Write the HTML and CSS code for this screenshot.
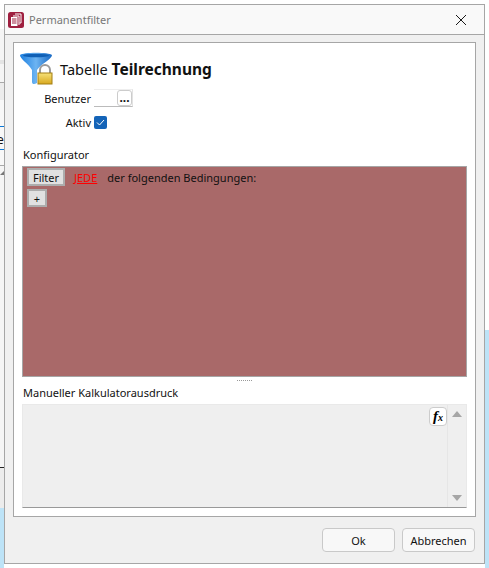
FILE: index.html
```html
<!DOCTYPE html>
<html lang="de">
<head>
  <meta charset="UTF-8">
  <title>Permanentfilter</title>
  <link rel="stylesheet" href="styles.css">
</head>
<body>
  <span class="behind-text">e</span>
  <span class="behind-arrow"></span>

  <div class="dialog">
    <div class="titlebar">
      <svg class="app-icon" width="16" height="16" viewBox="0 0 16 16">
        <rect x="0" y="0" width="16" height="16" rx="2.500" fill="#9e1f3f"/>
        <path d="M7 2h6v9h-1.500M5 4h6v9" fill="none" stroke="#fff" stroke-width="1"/>
        <path d="M3 5h6.500v9H3z" fill="#fff"/>
        <path d="M4 7h4.500M4 9h4.500M4 11h4.500" stroke="#9e1f3f" stroke-width="1"/>
      </svg>
      <span class="title">Permanentfilter</span>
      <svg class="close" width="10" height="10" viewBox="0 0 10 10">
        <path d="M0 0L10 10M10 0L0 10" stroke="#1a1a1a" stroke-width="1"/>
      </svg>
    </div>

    <div class="content">
      <div class="panel">
        <div class="head">
          <svg class="funnel" width="33" height="33" viewBox="0 0 33 33">
            <defs>
              <linearGradient id="blue" x1="0" y1="0" x2="1" y2="0">
                <stop offset="0" stop-color="#1c7fe0"/>
                <stop offset="0.5" stop-color="#6db4f2"/>
                <stop offset="1" stop-color="#1668c4"/>
              </linearGradient>
              <linearGradient id="gold" x1="0" y1="0" x2="0" y2="1">
                <stop offset="0" stop-color="#f7e27a"/>
                <stop offset="1" stop-color="#d8a81e"/>
              </linearGradient>
            </defs>
            <path d="M0 3C3 0 29 0 32 3C32 7 22 11 17 18V31C14 33 12 32 12 30V18C8 11 0 7 0 3Z" fill="url(#blue)"/>
            <ellipse cx="16" cy="3.500" rx="13" ry="1.800" fill="#0f5fb5"/>
            <path d="M20 22v-4a5 5 0 0 1 10 0v4" fill="none" stroke="#9a9a9a" stroke-width="2"/>
            <rect x="18" y="21" width="14" height="11" fill="url(#gold)" stroke="#a37f12"/>
          </svg>
          <span class="head-text">Tabelle <b>Teilrechnung</b></span>
        </div>

        <div class="form">
          <label class="form-label">Benutzer</label>
          <div class="picker"><span class="picker-btn">...</span></div>
          <label class="form-label">Aktiv</label>
          <span class="check">
            <svg width="9" height="7" viewBox="0 0 9 7"><path d="M1 3.500L3.500 6L8 1" fill="none" stroke="#fff" stroke-width="1"/></svg>
          </span>
        </div>

        <div class="section-label">Konfigurator</div>
        <div class="config">
          <div class="config-row">
            <button class="btn-flat btn-filter">Filter</button>
            <a class="jede">JEDE</a>
            <span>der folgenden Bedingungen:</span>
          </div>
          <button class="btn-flat btn-add">+</button>
        </div>

        <div class="splitter"></div>

        <div class="section-label section-label-calc">Manueller Kalkulatorausdruck</div>
        <div class="calc">
          <div class="calc-main">
            <span class="fx"><i>f</i><i class="fx-x">x</i></span>
          </div>
          <div class="scroll">
            <span class="arrow-up"></span>
            <span class="arrow-down"></span>
          </div>
        </div>
      </div>

      <div class="footer">
        <button class="btn">Ok</button>
        <button class="btn">Abbrechen</button>
      </div>
    </div>
  </div>
</body>
</html>
```

FILE: styles.css
```css
html, body {
  margin: 0;
  height: 568px;
  overflow: hidden;
}
body {
  box-sizing: border-box;
  padding: 4px;
  position: relative;
  font-family: "Noto Sans", sans-serif;
  font-size: 11px;
  color: #111;
  background:
    linear-gradient(#bde3f7, #bde3f7) left 0 top 508px / 4px 60px no-repeat,
    linear-gradient(#ececec, #ececec) left 0 top 468px / 4px 40px no-repeat,
    linear-gradient(#222, #222) left 0 top 467px / 4px 1px no-repeat,
    linear-gradient(#f5f5f5, #f5f5f5) left 0 top 166px / 4px 301px no-repeat,
    linear-gradient(#a8a8a8, #a8a8a8) left 0 top 165px / 4px 1px no-repeat,
    linear-gradient(#0a78d7, #0a78d7) left 0 top 149px / 4px 1px no-repeat,
    linear-gradient(#0a78d7, #0a78d7) left 0 top 126px / 4px 1px no-repeat,
    linear-gradient(#f8f8f8, #f8f8f8) left 0 top 100px / 4px 65px no-repeat,
    linear-gradient(#ececec, #ececec) left 0 top 83px / 4px 17px no-repeat,
    linear-gradient(#a8a8a8, #a8a8a8) left 0 top 82px / 4px 1px no-repeat,
    linear-gradient(#e4e4e4, #e4e4e4) left 0 top 60px / 4px 4px no-repeat,
    linear-gradient(#f5f5f5, #f5f5f5) left 0 top 29px / 4px 53px no-repeat,
    linear-gradient(#bde3f7, #bde3f7) right 0 top 330px / 4px 238px no-repeat,
    #fff;
}
.behind-text {
  position: absolute;
  left: -3px;
  top: 132px;
  font-size: 12px;
  line-height: 16px;
}
.behind-arrow {
  position: absolute;
  left: 0;
  top: 171px;
  border-left: 4px solid transparent;
  border-bottom: 4px solid #777;
}

.dialog {
  position: relative;
  width: 481px;
  height: 560px;
  box-sizing: border-box;
  border: 1px solid #a6a6a6;
  background: #f0f0f0;
  display: flex;
  flex-direction: column;
}
.titlebar {
  height: 29px;
  flex: none;
  background: #f9f9f9;
  border-bottom: 1px solid #a6a6a6;
  display: flex;
  align-items: center;
  padding: 0 18px 0 3px;
}
.title {
  margin-left: 5px;
  color: #777;
}
.close {
  margin-left: auto;
}
.app-icon {
  flex: none;
}

.content {
  flex: 1;
  display: flex;
  flex-direction: column;
  padding: 7px 8px 0 8px;
}
.panel {
  height: 475px;
  box-sizing: border-box;
  background: #fff;
  border: 1px solid #a6a6a6;
  padding: 9px 8px 8px 8px;
  display: flex;
  flex-direction: column;
}
.head {
  display: flex;
  align-items: center;
  height: 33px;
  margin-left: -2px;
}
.funnel {
  flex: none;
}
.head-text {
  margin-left: 7px;
  font-size: 14.500px;
  line-height: 20px;
}
.head-text b {
  font-size: 15.500px;
}
.form {
  display: grid;
  grid-template-columns: 69px auto;
  justify-content: start;
  align-items: center;
  column-gap: 3px;
  row-gap: 8px;
  margin-top: 4px;
}
.form-label {
  text-align: right;
}
.picker {
  width: 39px;
  height: 18px;
  box-sizing: border-box;
  border-bottom: 1px solid #bbb;
  border-right: 1px solid #e2e2e2;
  border-top: 1px solid #eee;
  display: flex;
  justify-content: flex-end;
}
.picker-btn {
  width: 15px;
  height: 16px;
  box-sizing: border-box;
  border: 1px solid #ccc;
  border-radius: 3px;
  font-size: 12px;
  font-weight: bold;
  line-height: 14px;
  text-align: center;
  background: #fff;
}
.check {
  width: 13px;
  height: 13px;
  border-radius: 2px;
  background: #1464b8;
  display: flex;
  align-items: center;
  justify-content: center;
}
.section-label {
  margin-top: 17px;
  line-height: 16px;
  margin-left: 1px;
}
.section-label-calc {
  margin-top: 4px;
}
.config {
  margin-top: 3px;
  height: 211px;
  flex: none;
  box-sizing: border-box;
  background: #a96969;
  border: 1px solid #a6a6a6;
  padding: 1px 4px;
}
.config-row {
  display: flex;
  align-items: center;
}
.btn-flat {
  display: block;
  padding: 0;
  font-family: inherit;
  font-size: 11px;
  color: #111;
  background: #e1e1e1;
  border: 2px solid #adadad;
  height: 18px;
  line-height: 13px;
}
.btn-filter {
  width: 38px;
}
.btn-add {
  width: 20px;
  margin-top: 3px;
}
.jede {
  margin-left: 9px;
  margin-right: 10px;
  color: #f00;
  text-decoration: underline;
}
.splitter {
  height: 1px;
  width: 15px;
  margin: 3px auto 0;
  flex: none;
  background: repeating-linear-gradient(90deg, #999 0 1px, transparent 1px 2px);
}
.calc {
  margin-top: 3px;
  height: 104px;
  flex: none;
  box-sizing: border-box;
  display: flex;
  background: #efefef;
  border: 1px solid #e9e9e9;
  border-bottom-color: #999;
}
.calc-main {
  flex: 1;
  display: flex;
  justify-content: flex-end;
  align-items: flex-start;
}
.fx {
  width: 18px;
  height: 19px;
  margin-top: 2px;
  box-sizing: border-box;
  border: 1px solid #ccc;
  border-radius: 4px;
  background: #fff;
  font-family: "Liberation Serif", serif;
  font-weight: bold;
  font-size: 15px;
  line-height: 16px;
  text-align: center;
  color: #000;
}
.fx-x {
  font-size: 10px;
}
.scroll {
  width: 18px;
  border-left: 1px solid #e6e6e6;
  display: flex;
  flex-direction: column;
  justify-content: space-between;
  align-items: center;
  padding: 6px 0;
}
.arrow-up, .arrow-down {
  border-left: 5px solid transparent;
  border-right: 5px solid transparent;
}
.arrow-up {
  border-bottom: 6px solid #a6a6a6;
}
.arrow-down {
  border-top: 6px solid #a6a6a6;
}
.footer {
  display: flex;
  justify-content: flex-end;
  gap: 7px;
  margin-top: 11px;
  padding-right: 1px;
}
.btn {
  width: 73px;
  height: 24px;
  padding: 0;
  font-family: inherit;
  font-size: 11px;
  color: #111;
  background: #f8f8f8;
  border: 1px solid #c9c9c9;
  border-radius: 4px;
}
```
